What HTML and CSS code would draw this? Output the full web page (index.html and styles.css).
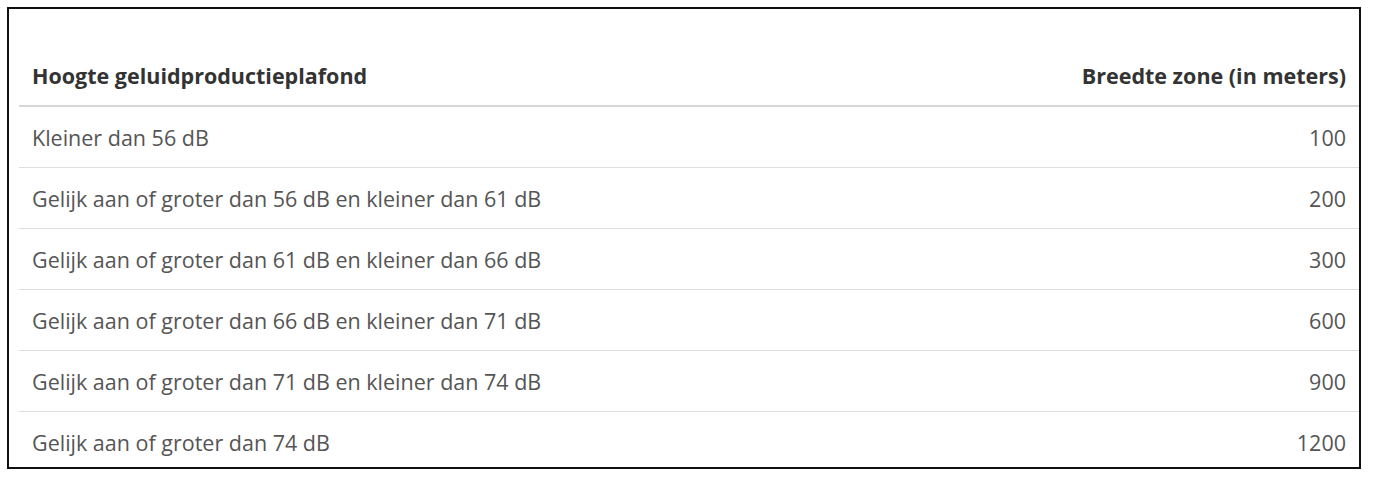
FILE: index.html
```html
<!DOCTYPE html>
<html lang="nl">
<head>
<meta charset="utf-8">
<title>Geluidproductieplafond</title>
<link rel="stylesheet" href="styles.css">
</head>
<body>
<div class="frame">
  <table class="zones">
    <thead>
      <tr><th class="col-a">Hoogte geluidproductieplafond</th><th class="col-b">Breedte zone (in meters)</th></tr>
    </thead>
    <tbody>
      <tr><td>Kleiner dan 56 dB</td><td class="num">100</td></tr>
      <tr><td>Gelijk aan of groter dan 56 dB en kleiner dan 61 dB</td><td class="num">200</td></tr>
      <tr><td>Gelijk aan of groter dan 61 dB en kleiner dan 66 dB</td><td class="num">300</td></tr>
      <tr><td>Gelijk aan of groter dan 66 dB en kleiner dan 71 dB</td><td class="num">600</td></tr>
      <tr><td>Gelijk aan of groter dan 71 dB en kleiner dan 74 dB</td><td class="num">900</td></tr>
      <tr><td>Gelijk aan of groter dan 74 dB</td><td class="num">1200</td></tr>
    </tbody>
  </table>
</div>
</body>
</html>
```
FILE: styles.css
```css
html, body {
  margin: 0;
  padding: 0;
  background: #ffffff;
}
body {
  font-family: "Open Sans", "Liberation Sans", sans-serif;
  color: #555555;
}
.frame {
  margin: 7px 0 0 7px;
  width: 1354px;
  height: 462px;
  border: 2px solid #111111;
  padding: 36px 0 0 10px;
  box-sizing: border-box;
}
.zones {
  width: 100%;
  border-collapse: collapse;
}
.zones th {
  font-weight: 700;
  color: #333333;
  font-size: 21.5px;
  height: 60px;
  padding: 0 13px;
  border-bottom: 2px solid #d6d6d6;
  vertical-align: middle;
}
.col-a { text-align: left; }
.col-b { text-align: right; }
.zones td {
  font-size: 21.5px;
  height: 60px;
  padding: 0 13px;
  vertical-align: middle;
  border-bottom: 1px solid #dedede;
}
.zones tbody tr:last-child td { border-bottom: none; }
.zones td.num { text-align: right; }
```
